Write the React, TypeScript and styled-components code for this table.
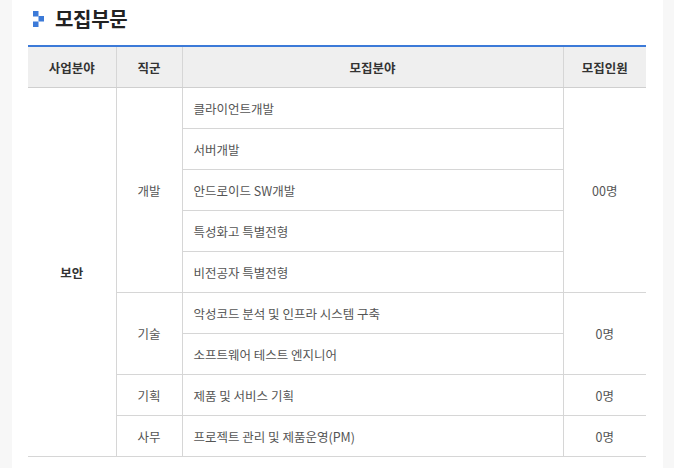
import styled, { createGlobalStyle } from 'styled-components';

const GlobalStyle = createGlobalStyle`
	html,
	body {
		margin: 0;
		padding: 0;
		background: #f7f7f7;
	}

	body {
		font-family: 'Noto Sans CJK KR', 'Noto Sans', sans-serif;
	}
`;

type Job = {
	title: string;
};

type Group = {
	role: string;
	count: string;
	jobs: Job[];
};

const groups: Group[] = [
	{
		role: '개발',
		count: '00명',
		jobs: [
			{ title: '클라이언트개발' },
			{ title: '서버개발' },
			{ title: '안드로이드 SW개발' },
			{ title: '특성화고 특별전형' },
			{ title: '비전공자 특별전형' },
		],
	},
	{
		role: '기술',
		count: '0명',
		jobs: [{ title: '악성코드 분석 및 인프라 시스템 구축' }, { title: '소프트웨어 테스트 엔지니어' }],
	},
	{
		role: '기획',
		count: '0명',
		jobs: [{ title: '제품 및 서비스 기획' }],
	},
	{
		role: '사무',
		count: '0명',
		jobs: [{ title: '프로젝트 관리 및 제품운영(PM)' }],
	},
];

const Page = styled.div`
	width: 651px;
	min-height: 468px;
	margin-left: 12px;
	padding: 0 17px 0 16px;
	box-sizing: border-box;
	background: #fff;
`;

const Heading = styled.h2`
	display: flex;
	align-items: center;
	gap: 10px;
	height: 45px;
	margin: 0;
	padding: 0 0 8px 5px;
	box-sizing: border-box;
	font-size: 20px;
	font-weight: 700;
	color: #222;
	letter-spacing: -0.3px;
`;

const Bullet = styled.svg`
	flex-shrink: 0;
`;

const Table = styled.table`
	width: 618px;
	border-collapse: collapse;
	table-layout: fixed;
	border-top: 2px solid #3c7ad8;
	border-bottom: 1px solid #cfcfcf;
	font-size: 12.5px;
`;

const Th = styled.th<{ $last?: boolean }>`
	height: 40px;
	padding: 0;
	background: #efefef;
	color: #333;
	font-weight: 700;
	text-align: center;
	border-bottom: 1px solid #cfcfcf;
	border-right: ${(p) => (p.$last ? 'none' : '1px solid #d6d6d6')};
`;

const Td = styled.td<{ $align?: 'left' | 'center'; $strong?: boolean; $last?: boolean }>`
	height: 40px;
	padding: 0 ${(p) => (p.$align === 'left' ? '11px' : '0')};
	color: ${(p) => (p.$strong ? '#333' : '#555')};
	font-weight: ${(p) => (p.$strong ? 700 : 400)};
	text-align: ${(p) => p.$align || 'center'};
	vertical-align: middle;
	border-bottom: 1px solid #d6d6d6;
	border-right: ${(p) => (p.$last ? 'none' : '1px solid #d6d6d6')};
`;

const totalRows = groups.reduce((sum, g) => sum + g.jobs.length, 0);

const App = () => {
	return (
		<>
			<GlobalStyle />
			<Page>
				<Heading>
					<Bullet width="12" height="16" viewBox="0 0 12 16">
						<rect x="0" y="0" width="5.5" height="5.5" fill="#3c7ad8" />
						<rect x="5.5" y="5" width="5.5" height="5.5" fill="#3c7ad8" />
						<rect x="0" y="10.5" width="5.5" height="5.5" fill="#3c7ad8" />
					</Bullet>
					모집부문
				</Heading>
				<Table>
					<colgroup>
						<col style={{ width: 88 }} />
						<col style={{ width: 66 }} />
						<col style={{ width: 381 }} />
						<col style={{ width: 83 }} />
					</colgroup>
					<thead>
						<tr>
							<Th>사업분야</Th>
							<Th>직군</Th>
							<Th>모집분야</Th>
							<Th $last>모집인원</Th>
						</tr>
					</thead>
					<tbody>
						{groups.map((group, gi) =>
							group.jobs.map((job, ji) => (
								<tr key={`${gi}-${ji}`}>
									{gi === 0 && ji === 0 && (
										<Td rowSpan={totalRows} $strong>
											보안
										</Td>
									)}
									{ji === 0 && <Td rowSpan={group.jobs.length}>{group.role}</Td>}
									<Td $align="left">{job.title}</Td>
									{ji === 0 && (
										<Td rowSpan={group.jobs.length} $last>
											{group.count}
										</Td>
									)}
								</tr>
							))
						)}
					</tbody>
				</Table>
			</Page>
		</>
	);
};

export default App;
